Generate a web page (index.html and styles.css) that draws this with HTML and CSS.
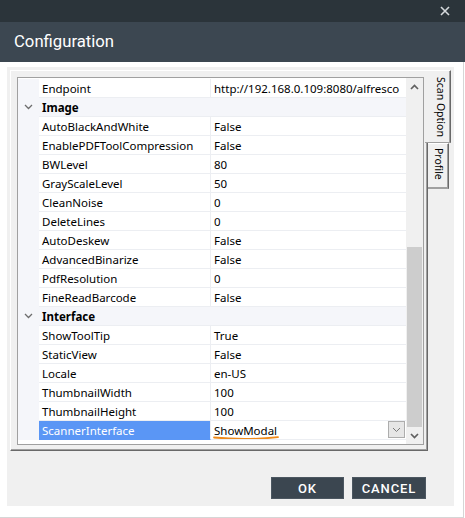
FILE: index.html
```html
<!DOCTYPE html>
<html>
<head>
<meta charset="utf-8">
<link rel="stylesheet" href="styles.css">
</head>
<body>
<div class="window">
  <div class="topbar">
    <svg class="close" width="10" height="10" viewBox="0 0 10 10"><path d="M1 1L9 9M9 1L1 9" stroke="#d5d9dc" stroke-width="1.6" fill="none"/></svg>
  </div>
  <div class="titlebar">Configuration</div>
  <div class="content">
    <div class="panel">
      <div class="tabarea">
        <div class="tabpage">
          <div class="grid">
            <div class="rows">
              <div class="row"><div class="gut"></div><div class="name">Endpoint</div><div class="val">http://192.168.0.109:8080/alfresco</div></div>
              <div class="row cat"><div class="gut"><svg width="9" height="6" viewBox="0 0 9 6"><path d="M1 1L4.5 4.5L8 1" stroke="#6d6d6d" stroke-width="1.3" fill="none"/></svg></div><div class="catname">Image</div></div>
              <div class="row"><div class="gut"></div><div class="name">AutoBlackAndWhite</div><div class="val">False</div></div>
              <div class="row"><div class="gut"></div><div class="name">EnablePDFToolCompression</div><div class="val">False</div></div>
              <div class="row"><div class="gut"></div><div class="name">BWLevel</div><div class="val">80</div></div>
              <div class="row"><div class="gut"></div><div class="name">GrayScaleLevel</div><div class="val">50</div></div>
              <div class="row"><div class="gut"></div><div class="name">CleanNoise</div><div class="val">0</div></div>
              <div class="row"><div class="gut"></div><div class="name">DeleteLines</div><div class="val">0</div></div>
              <div class="row"><div class="gut"></div><div class="name">AutoDeskew</div><div class="val">False</div></div>
              <div class="row"><div class="gut"></div><div class="name">AdvancedBinarize</div><div class="val">False</div></div>
              <div class="row"><div class="gut"></div><div class="name">PdfResolution</div><div class="val">0</div></div>
              <div class="row"><div class="gut"></div><div class="name">FineReadBarcode</div><div class="val">False</div></div>
              <div class="row cat"><div class="gut"><svg width="9" height="6" viewBox="0 0 9 6"><path d="M1 1L4.5 4.5L8 1" stroke="#6d6d6d" stroke-width="1.3" fill="none"/></svg></div><div class="catname">Interface</div></div>
              <div class="row"><div class="gut"></div><div class="name">ShowToolTip</div><div class="val">True</div></div>
              <div class="row"><div class="gut"></div><div class="name">StaticView</div><div class="val">False</div></div>
              <div class="row"><div class="gut"></div><div class="name">Locale</div><div class="val">en-US</div></div>
              <div class="row"><div class="gut"></div><div class="name">ThumbnailWidth</div><div class="val">100</div></div>
              <div class="row"><div class="gut"></div><div class="name">ThumbnailHeight</div><div class="val">100</div></div>
              <div class="row sel"><div class="gut"></div><div class="name">ScannerInterface</div><div class="val edit"><span class="modal">ShowModal<svg class="squiggle" width="66" height="5" viewBox="0 0 66 5"><path d="M1 1.5Q33 4.5 65 1.2" stroke="#ee8a1a" stroke-width="1.8" fill="none" stroke-linecap="round"/></svg></span><div class="ddbtn"><svg width="9" height="6" viewBox="0 0 9 6"><path d="M1 1L4.5 4.5L8 1" stroke="#7a7a7a" stroke-width="1" fill="none"/></svg></div></div></div>
            </div>
            <div class="sb">
              <div class="sbbtn"><svg width="9" height="6" viewBox="0 0 9 6"><path d="M1 5L4.5 1.5L8 5" stroke="#606060" stroke-width="1.7" fill="none"/></svg></div>
              <div class="track"><div class="thumb"></div></div>
              <div class="sbbtn"><svg width="9" height="6" viewBox="0 0 9 6"><path d="M1 1L4.5 4.5L8 1" stroke="#606060" stroke-width="1.7" fill="none"/></svg></div>
            </div>
          </div>
        </div>
        <div class="tabstrip">
          <div class="tab active">Scan Option</div>
          <div class="tab">Profile</div>
          <div class="tabrest"></div>
        </div>
      </div>
      <div class="footer">
        <button class="btn">OK</button>
        <button class="btn">CANCEL</button>
      </div>
    </div>
  </div>
</div>
</body>
</html>
```
FILE: styles.css
```css
html, body {
  margin: 0;
  padding: 0;
  background: #fff;
}
.window {
  width: 465px;
  height: 518px;
  display: flex;
  flex-direction: column;
  font-family: "Noto Sans", "Open Sans", sans-serif;
}
.topbar {
  height: 22px;
  background: #2b343a;
  display: flex;
  justify-content: flex-end;
  align-items: center;
  padding-right: 15px;
}
.titlebar {
  height: 40px;
  background: #3c4751;
  color: #fff;
  font-family: Roboto, sans-serif;
  font-size: 16.7px;
  display: flex;
  align-items: center;
  padding-left: 14px;
  padding-bottom: 1px;
  box-sizing: border-box;
}
.content {
  width: 464px;
  box-sizing: border-box;
  height: 456px;
  border-right: 1px solid #d6d6d6;
  border-bottom: 1px solid #d6d6d6;
  padding: 5px 9px 11px 7px;
}
.panel {
  height: 100%;
  background: #f0f0f0;
  box-sizing: border-box;
  padding: 3px 3px 0 3px;
  display: flex;
  flex-direction: column;
}
.tabarea {
  height: 381px;
  display: flex;
}
.tabpage {
  width: 418px;
  box-sizing: border-box;
  border-top: 1px solid #fff;
  border-left: 1px solid #fff;
  border-right: 1px solid #696969;
  border-bottom: 1px solid #696969;
  box-shadow: inset -1px -1px 0 #a0a0a0;
  padding: 6px 3px 5px 6px;
  position: relative;
  z-index: 1;
}
.grid {
  height: 100%;
  box-sizing: border-box;
  border: 1px solid #a0a0a0;
  background: #fff;
  display: flex;
}
.rows {
  flex: 1;
  display: flex;
  flex-direction: column;
  font-size: 11.5px;
  color: #000;
  padding-top: 1px;
}
.row {
  height: 19px;
  display: flex;
  background: #f5f6fa;
  line-height: 20px;
  overflow: hidden;
}
.gut {
  width: 21px;
  display: flex;
  justify-content: center;
  align-items: center;
  padding-bottom: 1px;
  box-sizing: border-box;
}
.name {
  width: 172px;
  box-sizing: border-box;
  background: #fff;
  border-bottom: 1px solid #eceef2;
  border-right: 1px solid #eceef2;
  padding-left: 3px;
  white-space: nowrap;
  overflow: hidden;
}
.val {
  flex: 1;
  background: #fff;
  border-bottom: 1px solid #eceef2;
  padding-left: 3px;
  white-space: nowrap;
  overflow: hidden;
  display: flex;
  align-items: flex-start;
}
.catname {
  flex: 1;
  font-weight: bold;
  padding-left: 3px;
  border-bottom: 1px solid #eceef2;
}
.sel .name {
  background: #5a96f5;
  color: #fff;
  border-bottom-color: #5a96f5;
}
.edit {
  justify-content: space-between;
  padding-right: 1px;
}
.modal {
  position: relative;
}
.squiggle {
  position: absolute;
  left: -1px;
  top: 15px;
}
.ddbtn {
  width: 17px;
  height: 17px;
  box-sizing: border-box;
  border: 1px solid #adadad;
  background: #e6e6e6;
  display: flex;
  align-items: center;
  justify-content: center;
  margin-top: 0;
}
.sb {
  width: 17px;
  background: #f0f0f0;
  display: flex;
  flex-direction: column;
}
.sbbtn {
  height: 17px;
  display: flex;
  align-items: center;
  justify-content: center;
}
.track {
  flex: 1;
  display: flex;
  flex-direction: column;
  justify-content: flex-end;
  align-items: center;
}
.thumb {
  width: 15px;
  height: 180px;
  background: #cdcdcd;
}
.tabstrip {
  width: 23px;
  display: flex;
  flex-direction: column;
}
.tab {
  writing-mode: vertical-rl;
  white-space: nowrap;
  overflow: hidden;
  font-family: "Noto Sans", sans-serif;
  font-size: 10.5px;
  color: #000;
  box-sizing: border-box;
  background: #f0f0f0;
  flex: none;
}
.tab.active {
  height: 73px;
  width: 26px;
  margin-left: -3px;
  position: relative;
  z-index: 2;
  border-top: 1px solid #fff;
  border-right: 1px solid #696969;
  border-bottom: 1px solid #a0a0a0;
  box-shadow: inset -1px 0 0 #a0a0a0;
  padding-top: 6px;
  padding-left: 4px;
  line-height: 18px;
}
.tab:not(.active) {
  height: 46px;
  width: 21px;
  border-right: 1px solid #696969;
  border-bottom: 1px solid #a0a0a0;
  border-top: 1px solid #fff;
  box-shadow: inset -1px -1px 0 #a0a0a0;
  padding-top: 4px;
  line-height: 18px;
}
.tabrest {
  flex: 1;
}
.footer {
  flex: 1;
  display: flex;
  justify-content: flex-end;
  align-items: flex-start;
  gap: 8px;
  padding-top: 26px;
  padding-right: 25px;
}
.btn {
  height: 22px;
  box-sizing: border-box;
  background: #3b4650;
  border: 1px solid #4c5761;
  color: #fff;
  font-family: Roboto, sans-serif;
  font-weight: 500;
  font-size: 13px;
  letter-spacing: 0.9px;
  padding: 0;
  margin: 0;
}
.btn:first-child {
  width: 73px;
}
.btn:last-child {
  width: 74px;
}
```
